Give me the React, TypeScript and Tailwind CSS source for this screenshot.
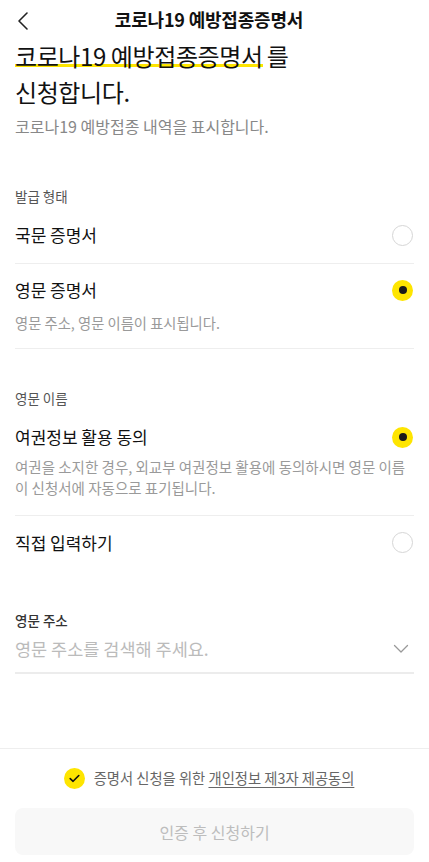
import React, { useState } from 'react';

const font = { fontFamily: '"Noto Sans CJK KR", "Noto Sans", sans-serif' };

const Radio = ({ checked }: { checked: boolean }) =>
  checked ? (
    <span className="flex h-[21px] w-[21px] items-center justify-center rounded-full bg-[#fee500]">
      <span className="h-[8px] w-[8px] rounded-full bg-[#1a1a1a]" />
    </span>
  ) : (
    <span className="h-[21px] w-[21px] rounded-full border-[1.5px] border-[#d6d6d6] bg-white" />
  );

const App = () => {
  const [issueType, setIssueType] = useState('en');
  const [nameType, setNameType] = useState('passport');

  return (
    <div className="flex h-[862px] w-full flex-col bg-white text-[#111]" style={font}>
      {/* Header */}
      <header className="relative flex h-[38px] items-center justify-center pr-[11px]">
        <button className="absolute left-[14px] top-[9px] p-[2px]" aria-label="back">
          <svg width="14" height="20" viewBox="0 0 14 20" fill="none">
            <path d="M11 2 L3 10 L11 18" stroke="#222" strokeWidth="1.6" strokeLinecap="round" strokeLinejoin="round" />
          </svg>
        </button>
        <h1 className="text-[18px] font-bold tracking-[-0.2px]">코로나19 예방접종증명서</h1>
      </header>

      <main className="px-[15px]">
        {/* Heading */}
        <div className="text-[24px] leading-[36px] tracking-[-0.4px]">
          <span className="bg-[linear-gradient(transparent_26px,#fee500_26px,#fee500_29px,transparent_29px)]">
            코로나19 예방접종증명서
          </span>
          <span className="ml-[4px]">를</span>
          <br />
          신청합니다.
        </div>
        <p className="mt-[5px] text-[16px] leading-[22px] text-[#888]">코로나19 예방접종 내역을 표시합니다.</p>

        {/* 발급 형태 */}
        <p className="mt-[50px] text-[13.5px] leading-[18px] text-[#555]">발급 형태</p>
        <div className="mt-[2px]">
          <button
            onClick={() => setIssueType('ko')}
            className="flex h-[57px] w-full items-center justify-between border-b border-[#eeeeee] pr-[1px] text-left"
          >
            <span className="text-[17px]">국문 증명서</span>
            <Radio checked={issueType === 'ko'} />
          </button>
          <div className="border-b border-[#eeeeee] pb-[15px] pt-[13px]">
            <button onClick={() => setIssueType('en')} className="flex w-full items-center justify-between pr-[1px] text-left">
              <span className="text-[17px] leading-[26px]">영문 증명서</span>
              <Radio checked={issueType === 'en'} />
            </button>
            <p className="mt-[10px] text-[14.3px] leading-[20px] text-[#9a9a9a]">영문 주소, 영문 이름이 표시됩니다.</p>
          </div>
        </div>

        {/* 영문 이름 */}
        <p className="mt-[40px] text-[13.5px] leading-[18px] text-[#555]">영문 이름</p>
        <div className="mt-[17px] border-b border-[#eeeeee] pb-[17px]">
          <button onClick={() => setNameType('passport')} className="flex w-full items-center justify-between pr-[1px] text-left">
            <span className="text-[17px] leading-[26px]">여권정보 활용 동의</span>
            <Radio checked={nameType === 'passport'} />
          </button>
          <p className="mt-[6px] break-all text-[14.5px] leading-[21px] text-[#9a9a9a]">
            여권을 소지한 경우, 외교부 여권정보 활용에 동의하시면 영문 이름이 신청서에 자동으로 표기됩니다.
          </p>
        </div>
        <button
          onClick={() => setNameType('manual')}
          className="flex h-[53px] w-full items-center justify-between pr-[1px] text-left"
        >
          <span className="text-[17px]">직접 입력하기</span>
          <Radio checked={nameType === 'manual'} />
        </button>

        {/* 영문 주소 */}
        <p className="mt-[42px] text-[13.5px] font-medium leading-[18px] text-[#333]">영문 주소</p>
        <div className="mt-[5px] flex h-[40px] items-center justify-between border-b-2 border-[#ececec] pb-[8px]">
          <span className="text-[17.5px] text-[#bbb]">영문 주소를 검색해 주세요.</span>
          <svg width="16" height="10" viewBox="0 0 16 10" fill="none" className="mr-[5px]">
            <path d="M1.5 1.5 L8 8 L14.5 1.5" stroke="#999" strokeWidth="1.3" strokeLinecap="round" strokeLinejoin="round" />
          </svg>
        </div>
      </main>

      {/* Footer */}
      <footer className="mt-auto border-t border-[#eeeeee] px-[15px] pb-[7px] pt-[18px]">
        <div className="flex items-center justify-center gap-[9px] pr-[11px]">
          <span className="flex h-[21px] w-[21px] items-center justify-center rounded-full bg-[#fee500]">
            <svg width="11" height="9" viewBox="0 0 11 9" fill="none">
              <path d="M1.2 4.6 L4.1 7.3 L9.8 1.5" stroke="#111" strokeWidth="1.6" strokeLinecap="round" strokeLinejoin="round" />
            </svg>
          </span>
          <span className="text-[14.3px] leading-[22px] text-[#666]">
            증명서 신청을 위한 <span className="underline underline-offset-[3px]">개인정보 제3자 제공동의</span>
          </span>
        </div>
        <button className="mt-[19px] h-[47px] w-full rounded-[8px] bg-[#f8f8f8] text-[16px] text-[#bdbdbd]">
          인증 후 신청하기
        </button>
      </footer>
    </div>
  );
};

export default App;
